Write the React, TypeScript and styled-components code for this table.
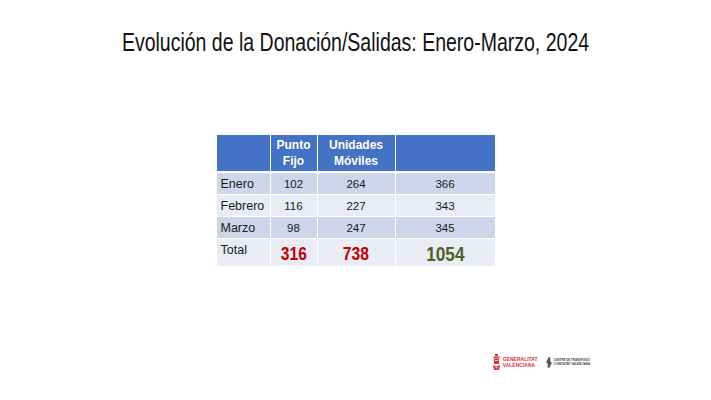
import React from 'react';
import styled, { createGlobalStyle } from 'styled-components';

const GlobalStyle = createGlobalStyle`
    html, body {
        margin: 0;
        padding: 0;
        background: #ffffff;
    }
`

const Slide = styled.div`
    width: 711px;
    height: 400px;
    display: flex;
    flex-direction: column;
    align-items: center;
    font-family: "Liberation Sans", Arial, sans-serif;
    overflow: hidden;
`

// Arial Narrow is not installed, so squeeze Liberation Sans instead
const Title = styled.h1`
    margin: 29px 0 0;
    font-weight: normal;
    font-size: 25px;
    line-height: 26px;
    color: #111111;
    white-space: nowrap;
    transform: scaleX(0.78);
`

const Table = styled.table`
    margin-top: 79px;
    border-collapse: collapse;
    color: #1a1a1a;
`

const HeadCell = styled.th<{ $w: number }>`
    width: ${p => p.$w}px;
    height: 36px;
    padding: 0;
    background: #4472c4;
    color: #ffffff;
    font-weight: bold;
    font-size: 12px;
    line-height: 16px;
    text-align: center;
    border: 1px solid #ffffff;
    border-bottom-width: 2px;
`

const Row = styled.tr<{ $shade: boolean }>`
    background: ${p => (p.$shade ? '#cfd5ea' : '#e9ebf5')};
`

const Label = styled.td<{ $tall?: boolean }>`
    height: ${p => (p.$tall ? 23 : 21)}px;
    padding: ${p => (p.$tall ? 4 : 0)}px 0 0 4px;
    font-size: 12.5px;
    text-align: left;
    vertical-align: ${p => (p.$tall ? 'top' : 'middle')};
    border: 1px solid #ffffff;
`

const Num = styled.td`
    padding: 0;
    text-align: center;
    font-size: 11.5px;
    border: 1px solid #ffffff;
`

const Big = styled.td<{ $color: string; $size: number }>`
    padding: 2px 0 0;
    text-align: center;
    font-weight: bold;
    font-size: ${p => p.$size}px;
    color: ${p => p.$color};
    border: 1px solid #ffffff;
`

const Narrow = styled.span`
    display: inline-block;
    transform: scaleX(0.82);
`

const Footer = styled.div`
    margin-top: auto;
    margin-bottom: 29px;
    align-self: stretch;
    display: flex;
    justify-content: flex-end;
    align-items: center;
    gap: 8px;
    padding-right: 121px;
`

const Logo = styled.div`
    display: flex;
    align-items: center;
    gap: 2px;
`

const LogoText = styled.div<{ $color: string; $size: number }>`
    display: flex;
    flex-direction: column;
    font-size: ${p => p.$size}px;
    line-height: 1.1;
    font-weight: bold;
    color: ${p => p.$color};
    white-space: nowrap;
`

const rows = [
    { label: 'Enero', fijo: 102, moviles: 264, total: 366 },
    { label: 'Febrero', fijo: 116, moviles: 227, total: 343 },
    { label: 'Marzo', fijo: 98, moviles: 247, total: 345 },
];

function GvaEmblem() {
    return (
        <svg width="9" height="17" viewBox="0 0 9 17">
            <rect x="3" y="0" width="3" height="2" fill="#d6333a" />
            <rect x="1.5" y="2.5" width="6" height="2" fill="#d6333a" />
            <rect x="2" y="5" width="5" height="5" fill="#d6333a" />
            <rect x="3" y="6" width="3" height="1" fill="#f3c3c5" />
            <path d="M1 11 Q4.5 13 8 11 L7 16 L2 16 Z" fill="#d6333a" />
            <rect x="3.5" y="12.5" width="2" height="2" fill="#f3c3c5" />
        </svg>
    );
}

function CtcvEmblem() {
    return (
        <svg width="6" height="11" viewBox="0 0 7 12">
            <path d="M3 0 L5 0 L5 5 L7 6 L4 12 L2 12 L2 7 L0 6 Z" fill="#555555" />
        </svg>
    );
}

function App() {
    return (
        <Slide>
            <GlobalStyle />
            <Title>Evolución de la Donación/Salidas: Enero-Marzo, 2024</Title>

            <Table>
                <thead>
                    <tr>
                        <HeadCell $w={53}></HeadCell>
                        <HeadCell $w={46}>Punto<br />Fijo</HeadCell>
                        <HeadCell $w={77}>Unidades<br />Móviles</HeadCell>
                        <HeadCell $w={99}></HeadCell>
                    </tr>
                </thead>
                <tbody>
                    {rows.map((r, i) => (
                        <Row key={r.label} $shade={i % 2 === 0}>
                            <Label>{r.label}</Label>
                            <Num>{r.fijo}</Num>
                            <Num>{r.moviles}</Num>
                            <Num>{r.total}</Num>
                        </Row>
                    ))}
                    <Row $shade={false}>
                        <Label $tall>Total</Label>
                        <Big $color="#c00000" $size={19}><Narrow>316</Narrow></Big>
                        <Big $color="#c00000" $size={19}><Narrow>738</Narrow></Big>
                        <Big $color="#4f6228" $size={21}><Narrow>1054</Narrow></Big>
                    </Row>
                </tbody>
            </Table>

            <Footer>
                <Logo>
                    <GvaEmblem />
                    <LogoText $color="#d6333a" $size={5}>
                        <span>GENERALITAT</span>
                        <span>VALENCIANA</span>
                    </LogoText>
                </Logo>
                <Logo>
                    <CtcvEmblem />
                    <LogoText $color="#444444" $size={2.9}>
                        <span>CENTRE DE TRANSFUSIÓ</span>
                        <span>COMUNITAT VALENCIANA</span>
                    </LogoText>
                </Logo>
            </Footer>
        </Slide>
    );
}

export default App;
